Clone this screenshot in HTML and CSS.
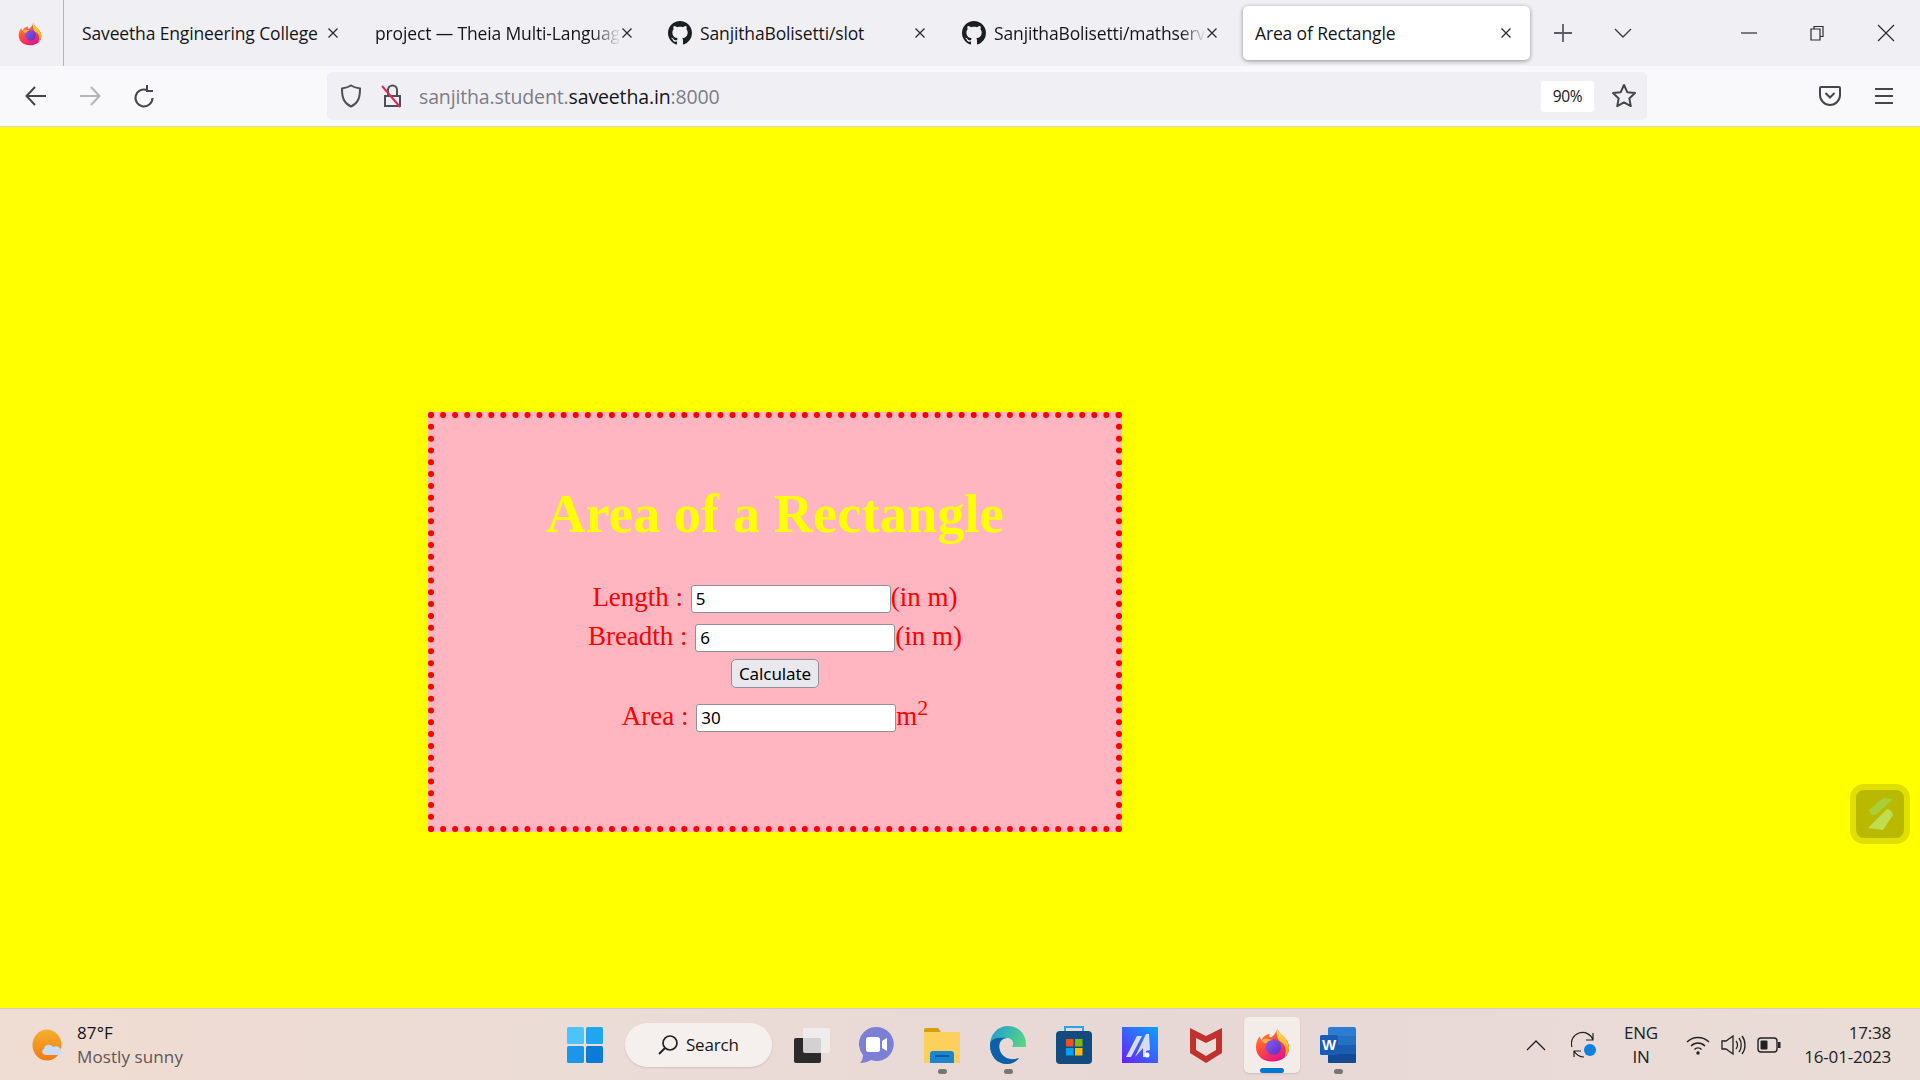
FILE: index.html
```html
<!DOCTYPE html>
<html lang="en">
<head>
    <meta charset="UTF-8">
    <meta name="viewport" content="width=device-width, initial-scale=1.0">
    <title>Area of Rectangle</title>
    <link rel="stylesheet" href="styles.css">
</head>
<body>

<svg class="defs" width="0" height="0">
    <defs>
        <linearGradient id="fxBody" x1="0" y1="0" x2="0.6" y2="1">
            <stop offset="0" stop-color="#ff9a3c"/>
            <stop offset="0.55" stop-color="#ff4a3d"/>
            <stop offset="1" stop-color="#e31587"/>
        </linearGradient>
        <linearGradient id="fxFlame" x1="0" y1="0" x2="0" y2="1">
            <stop offset="0" stop-color="#ffe14d"/>
            <stop offset="1" stop-color="#ff980e"/>
        </linearGradient>
        <linearGradient id="fxGlobe" x1="0" y1="0" x2="1" y2="1">
            <stop offset="0" stop-color="#8f5bf0"/>
            <stop offset="1" stop-color="#5a2fc0"/>
        </linearGradient>
        <symbol id="firefox" viewBox="0 0 36 36">
            <path d="M23 1c1 4 4 6 7 9 4 4 5 8 5 11 0 8-7 14-17 14S1 29 1 20c0-5 2-9 4-11 0 2 1 3 2 4 1-4 5-6 8-6-1 2 0 3 2 3 3-3 5-5 6-9z" fill="url(#fxBody)"/>
            <path d="M23 1c1 4 4 6 7 9 4 4 5 8 5 11 0 4-2 8-5 10 2-4 2-9 0-13-2-3-6-4-7-8-1-3-1-6 0-9z" fill="url(#fxFlame)"/>
            <circle cx="19" cy="20" r="8" fill="url(#fxGlobe)"/>
            <path d="M7 13c3-2 7-2 10 0-2 0-4 1-5 3-2 1-4-1-5-3z" fill="#ffb13d"/>
        </symbol>
        <symbol id="github" viewBox="0 0 16 16">
            <path fill="#1b1f23" d="M8 0C3.58 0 0 3.58 0 8c0 3.54 2.29 6.53 5.47 7.59.4.07.55-.17.55-.38 0-.19-.01-.82-.01-1.49-2.01.37-2.53-.49-2.69-.94-.09-.23-.48-.94-.82-1.13-.28-.15-.68-.52-.01-.53.63-.01 1.08.58 1.23.82.72 1.21 1.87.87 2.33.66.07-.52.28-.87.51-1.07-1.78-.2-3.64-.89-3.64-3.95 0-.87.31-1.59.82-2.15-.08-.2-.36-1.02.08-2.12 0 0 .67-.21 2.2.82.64-.18 1.32-.27 2-.27s1.36.09 2 .27c1.53-1.04 2.2-.82 2.2-.82.44 1.1.16 1.92.08 2.12.51.56.82 1.27.82 2.15 0 3.07-1.87 3.75-3.65 3.95.29.25.54.73.54 1.48 0 1.07-.01 1.93-.01 2.2 0 .21.15.46.55.38A8.01 8.01 0 0 0 16 8c0-4.42-3.58-8-8-8z"/>
        </symbol>
        <symbol id="close" viewBox="0 0 12 12">
            <path d="M1.5 1.5l9 9M10.5 1.5l-9 9" fill="none" stroke="#2b2a33" stroke-width="1.3"/>
        </symbol>
    </defs>
</svg>

<header class="browser">
    <div class="tabstrip">
        <div class="fx-button"><svg width="24" height="24"><use href="#firefox"/></svg></div>
        <div class="tab tab-first">
            <span class="tab-title">Saveetha Engineering College</span>
            <svg class="tab-close" width="12" height="12"><use href="#close"/></svg>
        </div>
        <div class="tab tab-second">
            <span class="tab-title fade">project — Theia Multi-Languag</span>
            <svg class="tab-close" width="12" height="12"><use href="#close"/></svg>
        </div>
        <div class="tab tab-third">
            <svg class="tab-icon" width="24" height="24"><use href="#github"/></svg>
            <span class="tab-title">SanjithaBolisetti/slot</span>
            <svg class="tab-close" width="12" height="12"><use href="#close"/></svg>
        </div>
        <div class="tab tab-fourth">
            <svg class="tab-icon" width="24" height="24"><use href="#github"/></svg>
            <span class="tab-title fade">SanjithaBolisetti/mathserv</span>
            <svg class="tab-close" width="12" height="12"><use href="#close"/></svg>
        </div>
        <div class="tab tab-active">
            <span class="tab-title">Area of Rectangle</span>
            <svg class="tab-close" width="12" height="12"><use href="#close"/></svg>
        </div>
        <svg class="new-tab" width="20" height="20" viewBox="0 0 20 20"><path d="M10 1v18M1 10h18" stroke="#5b5b66" stroke-width="1.8" fill="none"/></svg>
        <svg class="tab-list" width="18" height="10" viewBox="0 0 18 10"><path d="M1 1l8 8 8-8" stroke="#3a3a44" stroke-width="1.4" fill="none"/></svg>
        <div class="window-btns">
            <svg width="16" height="16" viewBox="0 0 16 16"><path d="M0 8h16" stroke="#2b2a33" stroke-width="1.2"/></svg>
            <svg width="16" height="16" viewBox="0 0 16 16"><path d="M5 3.5V1.5h9v10h-3M2 4h9v11H2z" stroke="#2b2a33" stroke-width="1.2" fill="none"/></svg>
            <svg width="18" height="18" viewBox="0 0 18 18"><path d="M1 1l16 16M17 1L1 17" stroke="#2b2a33" stroke-width="1.2"/></svg>
        </div>
    </div>
    <nav class="navbar">
        <svg class="nav-btn" width="22" height="20" viewBox="0 0 22 20"><path d="M10 1L1.5 10 10 19M2 10h19" stroke="#45454f" stroke-width="2" fill="none"/></svg>
        <svg class="nav-btn" width="22" height="20" viewBox="0 0 22 20"><path d="M12 1l8.5 9-8.5 9M20 10H1" stroke="#b4b4ba" stroke-width="2" fill="none"/></svg>
        <svg class="nav-btn" width="22" height="24" viewBox="0 0 22 24"><path d="M19.500 14A8.500 8.500 0 1 1 14 6M14 1v6h6" stroke="#45454f" stroke-width="2" fill="none"/></svg>
        <div class="urlbar">
            <svg width="22" height="24" viewBox="0 0 22 24"><path d="M11 1.500c3 2 6 2.500 9 3 0 8-1 14-9 18-8-4-9-10-9-18 3-.5 6-1 9-3z" stroke="#4e4e58" stroke-width="2" fill="none"/></svg>
            <svg class="lock" width="22" height="24" viewBox="0 0 22 24"><path d="M7 12V6a4.500 4.500 0 0 1 9 0v6M4 12h15v10H4z" stroke="#4e4e58" stroke-width="2" fill="none"/><path d="M1 2l18 21" stroke="#e22850" stroke-width="2"/></svg>
            <div class="url"><span class="dim">sanjitha.student.</span>saveetha.in<span class="dim">:8000</span></div>
            <div class="zoom-level">90%</div>
            <svg class="star" width="26" height="26" viewBox="0 0 26 26"><path d="M13 2l3.300 7.200 7.700.9-5.700 5.300 1.500 7.700L13 19.300l-6.800 3.800 1.500-7.700L2 10.100l7.700-.9z" stroke="#45454f" stroke-width="2" fill="none" stroke-linejoin="round"/></svg>
        </div>
        <svg class="pocket" width="22" height="22" viewBox="0 0 22 22"><path d="M2 2h18a1 1 0 0 1 1 1v7a10 10 0 0 1-20 0V3a1 1 0 0 1 1-1z" stroke="#45454f" stroke-width="2" fill="none"/><path d="M6.500 8l4.500 4.500L15.500 8" stroke="#45454f" stroke-width="2" fill="none"/></svg>
        <svg class="menu" width="20" height="18" viewBox="0 0 20 18"><path d="M1 2h18M1 9h18M1 16h18" stroke="#45454f" stroke-width="2"/></svg>
    </nav>
</header>

<main class="page">
    <div class="box">
        <h1>Area of a Rectangle</h1>
        <form class="calc">
            <div class="row">Length : <input type="text" value="5">(in m)</div>
            <div class="row row-tight">Breadth : <input type="text" value="6">(in m)</div>
            <div class="row-btn"><button type="button">Calculate</button></div>
            <div class="row row-area">Area : <input type="text" value="30">m<sup>2</sup></div>
        </form>
    </div>
    <div class="float-widget">
        <svg width="32" height="32" viewBox="0 0 32 32"><path d="M19 0L29 1 14 15Q9 19 7 16L5 12z" fill="#a8cf3a"/><path d="M23 11Q28 12 29 17L19 32 4 30z" fill="#c0dd50"/></svg>
    </div>
</main>

<footer class="taskbar">
    <div class="weather">
        <svg width="34" height="32" viewBox="0 0 34 32"><defs><linearGradient id="sun" x1="0" y1="0" x2="0" y2="1"><stop offset="0" stop-color="#f5b02e"/><stop offset="1" stop-color="#f27a12"/></linearGradient></defs><ellipse cx="15" cy="16" rx="14.500" ry="15.500" fill="url(#sun)"/><path d="M14 26c-4 0-5-5-2-6 0-4 6-6 9-2 4-2 9 1 8 5 0 2-1 3-3 3z" fill="#c9dcf5"/></svg>
        <div class="weather-text">
            <div>87°F</div>
            <div class="weather-sub">Mostly sunny</div>
        </div>
    </div>
    <div class="task-center">
        <svg class="start" width="36" height="36" viewBox="0 0 36 36">
            <rect x="0" y="0" width="17" height="17" rx="1.500" fill="#4cc2ff"/>
            <rect x="19" y="0" width="17" height="17" rx="1.500" fill="#1fa6f0"/>
            <rect x="0" y="19" width="17" height="17" rx="1.500" fill="#1a97ea"/>
            <rect x="19" y="19" width="17" height="17" rx="1.500" fill="#0a7bd6"/>
        </svg>
        <div class="search">
            <svg width="22" height="22" viewBox="0 0 22 22"><circle cx="13" cy="9" r="7" stroke="#222" stroke-width="1.700" fill="none"/><path d="M8 14l-6 6" stroke="#222" stroke-width="2"/></svg>
            <span>Search</span>
        </div>
        <div class="task-icons">
            <div class="task-icon">
                <svg class="taskview" width="38" height="36" viewBox="0 0 38 36"><rect x="1" y="11" width="27" height="25" rx="2" fill="#2b2b2b"/><rect x="10" y="1" width="27" height="25" rx="2" fill="#f1efee" fill-opacity="0.85"/></svg>
            </div>
            <div class="task-icon">
                <svg width="36" height="38" viewBox="0 0 36 38"><path d="M19 1a17 17 0 1 1-6 33c-3 2-7 3-11 3 2-2 3-5 3-8A17 17 0 0 1 19 1z" fill="#7b7fd6"/><rect x="8" y="11" width="14" height="15" rx="2.500" fill="#fff"/><path d="M24 15l5-3v13l-5-3z" fill="#fff"/></svg>
            </div>
            <div class="task-icon has-dot">
                <svg width="36" height="36" viewBox="0 0 36 36"><path d="M0 3a2 2 0 0 1 2-2h12l3 4H0z" fill="#d99e10"/><path d="M0 5h36v31H0z" fill="#fcd05a"/><path d="M6 36V27a3 3 0 0 1 3-3h18a3 3 0 0 1 3 3v9z" fill="#1a86cf"/><path d="M11 29h14" stroke="#0f5d9e" stroke-width="2"/></svg>
            </div>
            <div class="task-icon has-dot">
                <svg width="36" height="38" viewBox="0 0 36 38"><defs><linearGradient id="edgeTop" x1="0" y1="0" x2="1" y2="0.6"><stop offset="0" stop-color="#1c9bd6"/><stop offset="1" stop-color="#5fdc7c"/></linearGradient></defs><path d="M18 0c10 0 18 8 18 18v3H22c3-4 0-9-5-9-7 0-10 8-6 15 3 5 10 8 18 5-3 4-7 6-12 6C7 38 0 30 0 19 0 8 8 0 18 0z" fill="url(#edgeTop)"/><path d="M0 19c0 11 7 19 17 19 5 0 9-2 12-6-8 3-15 0-18-5-4-7-1-15 6-15-8-1-17 0-17 7z" fill="#0c5fa8"/></svg>
            </div>
            <div class="task-icon">
                <svg width="36" height="38" viewBox="0 0 36 38"><path d="M9 6V1h18v5" stroke="#27a6e0" stroke-width="2" fill="none"/><rect x="0" y="5" width="36" height="33" rx="4" fill="#134a80"/><rect x="10" y="13" width="7.500" height="7.500" fill="#f25022"/><rect x="19" y="13" width="7.500" height="7.500" fill="#7fba00"/><rect x="10" y="22" width="7.500" height="7.500" fill="#00a4ef"/><rect x="19" y="22" width="7.500" height="7.500" fill="#ffb900"/></svg>
            </div>
            <div class="task-icon">
                <svg width="36" height="36" viewBox="0 0 36 36"><defs><linearGradient id="appBg" x1="0" y1="1" x2="1" y2="0"><stop offset="0" stop-color="#6a1fff"/><stop offset="1" stop-color="#08a4ff"/></linearGradient></defs><rect width="36" height="36" fill="url(#appBg)"/><path d="M4 30L15 9h5L9 30zM13 30L24 7h3l1 16-4 1v6h-3v-9z" fill="#d9dcf5"/><circle cx="25" cy="28" r="2.500" fill="#fff"/></svg>
            </div>
            <div class="task-icon">
                <svg width="32" height="36" viewBox="0 0 32 36"><path d="M0 1l16 8 16-8v25L16 36 0 26z" fill="#c0302c"/><path d="M6 11v12l10 6 10-6V11l-10 5z" fill="#ecdcd8"/></svg>
            </div>
            <div class="task-icon task-active">
                <svg width="35" height="36"><use href="#firefox"/></svg>
                <span class="active-bar"></span>
            </div>
            <div class="task-icon has-dot">
                <svg width="36" height="36" viewBox="0 0 36 36"><rect x="8" y="0" width="28" height="36" rx="2" fill="#2b7cd3"/><rect x="8" y="9" width="28" height="9" fill="#2470c2"/><rect x="8" y="18" width="28" height="9" fill="#1a5cb0"/><rect x="8" y="27" width="28" height="9" rx="1" fill="#124a96"/><rect x="0" y="8" width="18" height="20" rx="1.500" fill="#1a5bb5"/><text class="word-w" x="9" y="23" text-anchor="middle">W</text></svg>
            </div>
        </div>
    </div>
    <div class="tray">
        <svg class="tray-chevron" width="20" height="12" viewBox="0 0 20 12"><path d="M1 11l9-9 9 9" stroke="#222" stroke-width="1.400" fill="none"/></svg>
        <svg class="tray-sync" width="26" height="28" viewBox="0 0 26 28"><path d="M1 16a11 11 0 0 1 21-7M22 2v7h-7M3 26v-6h7M3 20c3 5 7 6 10 6" stroke="#222" stroke-width="1.200" fill="none"/><circle cx="19" cy="19" r="6" fill="#0f7fe0"/></svg>
        <div class="lang">ENG<br>IN</div>
        <svg class="tray-wifi" width="24" height="20" viewBox="0 0 24 20"><path d="M1 7c6-6 16-6 22 0M5 11c4-4 10-4 14 0M8.500 14.500c2-2 5-2 7 0" stroke="#222" stroke-width="1.500" fill="none"/><circle cx="12" cy="18" r="1.700" fill="#222"/></svg>
        <svg class="tray-vol" width="25" height="22" viewBox="0 0 25 22"><path d="M1 7h4l7-5v18l-7-5H1z" stroke="#222" stroke-width="1.300" fill="none"/><path d="M15 7c2 2 2 6 0 8M18 4c3 4 3 10 0 14M21 2c4 5 4 13 0 18" stroke="#222" stroke-width="1.300" fill="none"/></svg>
        <svg class="tray-batt" width="24" height="16" viewBox="0 0 24 16"><rect x="1" y="1" width="19" height="14" rx="3" stroke="#222" stroke-width="1.400" fill="none"/><rect x="3.500" y="3.500" width="7" height="9" rx="1" fill="#222"/><rect x="21" y="5" width="2.500" height="6" fill="#222"/></svg>
        <div class="clock">17:38<br>16-01-2023</div>
    </div>
</footer>

</body>
</html>
```

FILE: styles.css
```css
* {
    box-sizing: border-box;
}
body {
    margin: 0;
    width: 1920px;
    height: 1080px;
    overflow: hidden;
    display: flex;
    flex-direction: column;
    font-family: "Open Sans", "Noto Sans", sans-serif;
    color: #15141a;
}
.defs {
    position: absolute;
}

/* browser chrome */
.browser {
    height: 127px;
    flex: none;
    border-bottom: 1px solid #d6d6d8;
}
.tabstrip {
    height: 66px;
    background-color: #f0f0f4;
    display: flex;
    align-items: center;
}
.fx-button {
    width: 64px;
    height: 66px;
    padding: 22px 0 0 18px;
    border-right: 1px solid #b5b5b8;
}
.tab {
    height: 54px;
    display: flex;
    align-items: center;
    font-size: 17.500px;
    letter-spacing: -0.14px;
    white-space: nowrap;
    flex: none;
}
.tab-title {
    flex: 1;
    min-width: 0;
    white-space: nowrap;
}
.tab-title.fade {
    -webkit-mask-image: linear-gradient(to right, #000 88%, transparent);
    mask-image: linear-gradient(to right, #000 88%, transparent);
}
.tab-close {
    flex: none;
}
.tab-icon {
    flex: none;
    margin-right: 8px;
}
.tab-first {
    width: 275px;
    padding-left: 18px;
}
.tab-second {
    width: 294px;
    padding-left: 36px;
}
.tab-third {
    width: 293px;
    padding-left: 35px;
}
.tab-fourth {
    width: 292px;
    padding-left: 36px;
}
.tab-active {
    width: 287px;
    margin-left: 25px;
    padding: 0 18px 0 12px;
    background-color: #fff;
    border-radius: 5px;
    box-shadow: 0 1px 4px rgba(0, 0, 0, 0.4);
}
.new-tab {
    margin-left: 23px;
}
.tab-list {
    margin-left: 41px;
}
.window-btns {
    margin-left: 109px;
    width: 154px;
    display: flex;
    justify-content: space-between;
    align-items: center;
}
.navbar {
    height: 60px;
    background-color: #f9f9fb;
    display: flex;
    align-items: center;
    padding-left: 25px;
}
.nav-btn {
    flex: none;
    margin-right: 32px;
}
.urlbar {
    width: 1320px;
    height: 48px;
    margin-left: 140px;
    padding: 0 10px 0 13px;
    background-color: #f0f0f4;
    border-radius: 5px;
    display: flex;
    align-items: center;
}
.lock {
    margin-left: 19px;
}
.url {
    margin-left: 16px;
    padding-top: 1px;
    font-size: 19.500px;
    letter-spacing: -0.14px;
    flex: 1;
}
.dim {
    color: #7c7c84;
}
.zoom-level {
    width: 53px;
    height: 31px;
    background-color: #fff;
    border-radius: 3px;
    font-size: 15.500px;
    letter-spacing: -0.3px;
    display: flex;
    align-items: center;
    justify-content: center;
}
.star {
    margin-left: 17px;
}
.pocket {
    margin-left: 172px;
}
.menu {
    margin-left: 33px;
}

/* page */
.page {
    flex: 1;
    position: relative;
    background-color: #ffff00;
    padding: 285px 0 0 428px;
}
.box {
    width: 694px;
    height: 420px;
    background-color: #ffb6c1;
    border: 6px dotted #ff0000;
    text-align: center;
    font-family: "Liberation Serif", serif;
    color: #ff0000;
    padding-top: 67px;
}
.box h1 {
    margin: 0;
    color: #ffff00;
    font-size: 54.500px;
    line-height: 58px;
    font-weight: bold;
}
.calc {
    margin-top: 39px;
}
.row {
    height: 31px;
    font-size: 27px;
    line-height: 31px;
}
.row-tight {
    margin-top: 8px;
}
.row-area {
    margin-top: 12px;
}
.row input {
    width: 200px;
    height: 28px;
    padding: 1px 4px;
    margin-left: 1px;
    border: 1px solid #8f8f9d;
    border-radius: 3px;
    background-color: #fff;
    font-family: "Noto Sans", sans-serif;
    font-size: 17px;
    color: #000;
    vertical-align: 1px;
}
.row sup {
    font-size: 22px;
    line-height: 0;
    vertical-align: 10px;
}
.row-btn {
    margin-top: 7px;
    height: 30px;
}
.row-btn button {
    width: 88px;
    height: 29px;
    padding: 0;
    border: 1px solid #8f8f9d;
    border-radius: 5px;
    background-color: #e9e9ed;
    font-family: "Noto Sans", sans-serif;
    font-size: 17px;
    letter-spacing: -0.1px;
    color: #000;
}
.float-widget {
    position: absolute;
    left: 1850px;
    top: 657px;
    width: 60px;
    height: 60px;
    border: 6px solid #e0e000;
    border-radius: 14px;
    background-color: #b9b900;
    display: flex;
    align-items: center;
    justify-content: center;
}

/* taskbar */
.taskbar {
    height: 72px;
    flex: none;
    display: flex;
    align-items: center;
    border-top: 1px solid #dcc9c4;
    background: linear-gradient(to right, #efdcd2, #ecdcd6 30%, #e7d8d6 60%, #eadcd6);
}
.weather {
    width: 625px;
    flex: none;
    display: flex;
    align-items: center;
    padding-left: 32px;
    font-size: 17px;
    letter-spacing: 0.1px;
    line-height: 24px;
}
.weather-text {
    margin-left: 11px;
}
.weather-sub {
    color: #5c5654;
}
.task-center {
    width: 746px;
    flex: none;
    display: flex;
    align-items: center;
    position: relative;
}
.start {
    position: absolute;
    left: -58px;
}
.search {
    width: 147px;
    height: 44px;
    flex: none;
    border-radius: 22px;
    background-color: #f5f0ee;
    box-shadow: 0 1px 2px rgba(0, 0, 0, 0.12);
    display: flex;
    align-items: center;
    padding-left: 32px;
    gap: 7px;
    font-size: 17px;
    letter-spacing: -0.2px;
}
.task-icons {
    display: flex;
    flex: none;
    margin-left: 5px;
}
.task-icon {
    width: 66px;
    height: 56px;
    display: flex;
    align-items: center;
    justify-content: center;
    position: relative;
}
.taskview {
    margin-left: 4px;
}
.has-dot::after {
    content: "";
    position: absolute;
    left: 29px;
    bottom: -1px;
    width: 9px;
    height: 5px;
    border-radius: 3px;
    background-color: #7a7472;
}
.task-active::before {
    content: "";
    position: absolute;
    left: 5px;
    top: 0;
    width: 56px;
    height: 56px;
    border-radius: 5px;
    background-color: #f4ece8;
    box-shadow: 0 1px 2px rgba(0, 0, 0, 0.12);
}
.task-active svg {
    position: relative;
}
.active-bar {
    position: absolute;
    left: 21px;
    bottom: 0;
    width: 24px;
    height: 5px;
    border-radius: 3px;
    background-color: #0078d4;
}
.word-w {
    font-family: "Liberation Sans", sans-serif;
    font-size: 15px;
    font-weight: bold;
    fill: #fff;
}
.tray {
    flex: 1;
    display: flex;
    align-items: center;
    position: relative;
    font-size: 17px;
    letter-spacing: -0.2px;
    line-height: 24px;
    color: #222;
}
.tray-chevron {
    margin-left: 155px;
}
.tray-sync {
    margin-left: 25px;
}
.lang {
    width: 60px;
    margin-left: 14px;
    text-align: center;
}
.tray-wifi {
    margin-left: 15px;
}
.tray-vol {
    margin-left: 11px;
}
.tray-batt {
    margin-left: 11px;
}
.clock {
    margin-left: auto;
    margin-right: 29px;
    text-align: right;
}
```
